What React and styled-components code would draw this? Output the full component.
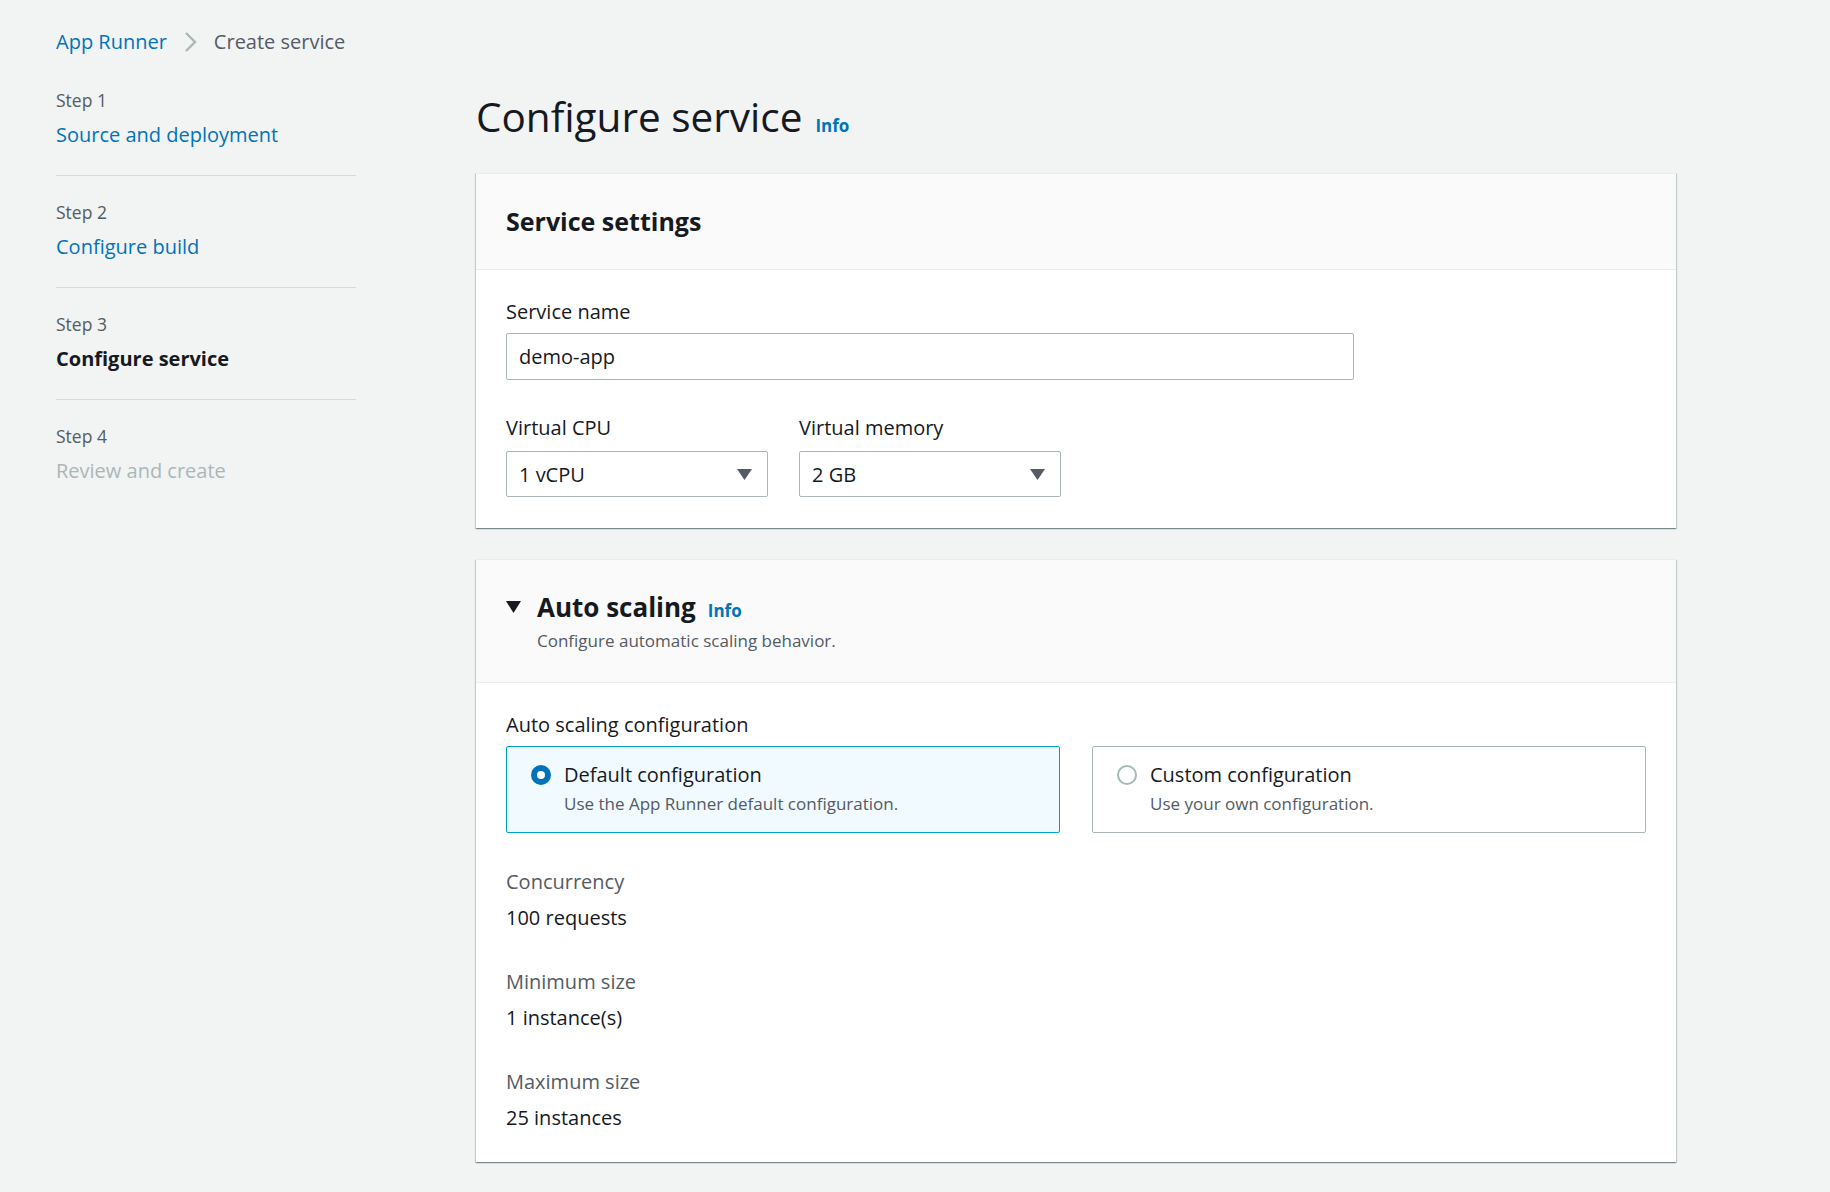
import React from "react";
import styled, { createGlobalStyle } from "styled-components";

const GlobalStyle = createGlobalStyle`
  html, body {
    margin: 0;
    padding: 0;
    background: #f2f3f3;
  }
  body {
    font-family: "Open Sans", "Noto Sans", Arial, sans-serif;
    color: #16191f;
  }
  * {
    box-sizing: border-box;
  }
`;

const Page = styled.div`
  min-height: 1192px;
  padding: 28px 0 0 56px;
`;

const Breadcrumbs = styled.nav`
  display: flex;
  align-items: center;
  gap: 17px;
  height: 28px;
  font-size: 20px;
  line-height: 28px;
`;

const Crumb = styled.span`
  color: ${(p) => (p.$link ? "#0073bb" : "#545b64")};
`;

const Layout = styled.div`
  display: grid;
  grid-template-columns: 300px 1200px;
  column-gap: 120px;
  margin-top: 8px;
`;

// 왼쪽 단계 목록
const StepNav = styled.ul`
  list-style: none;
  margin: 0;
  padding: 0;
`;

const StepItem = styled.li`
  padding: 24px 0 26px;
  border-bottom: 1px solid #d5dbdb;

  &:last-child {
    border-bottom: none;
  }
`;

const StepLabel = styled.div`
  font-size: 17.5px;
  line-height: 24px;
  color: #545b64;
`;

const stepColors = {
  link: "#0073bb",
  current: "#16191f",
  disabled: "#aab7b8",
};

const StepTitle = styled.div`
  margin-top: 9px;
  font-size: 20px;
  line-height: 28px;
  color: ${(p) => stepColors[p.$state]};
  font-weight: ${(p) => (p.$state === "current" ? 700 : 400)};
`;

const Main = styled.main`
  width: 1200px;
`;

const PageTitle = styled.h1`
  display: flex;
  align-items: baseline;
  gap: 13px;
  margin: 29px 0 32px;
  font-size: 40.5px;
  font-weight: 400;
  line-height: 48px;
`;

const Info = styled.span`
  font-size: 17px;
  font-weight: 700;
  color: #0073bb;
  line-height: 24px;
`;

const Card = styled.section`
  background: #ffffff;
  border-top: 1px solid #eaeded;
  box-shadow: 0 1px 1px 0 rgba(0, 28, 36, 0.3),
    1px 1px 1px 0 rgba(0, 28, 36, 0.15), -1px 1px 1px 0 rgba(0, 28, 36, 0.15);

  & + & {
    margin-top: 31px;
  }
`;

const CardHeader = styled.header`
  background: #fafafa;
  border-bottom: 1px solid #eaeded;
  padding: ${(p) => (p.$expandable ? "30px 30px 29px" : "31px 30px 32px")};
`;

const CardTitle = styled.h2`
  margin: 0;
  font-size: 25px;
  font-weight: 700;
  line-height: 32px;
`;

const CardBody = styled.div`
  padding: 28px 30px ${(p) => p.$bottom ?? 31}px;
`;

const FieldLabel = styled.div`
  font-size: 20px;
  line-height: 28px;
  margin-bottom: ${(p) => p.$gap ?? 7}px;
`;

const TextInput = styled.div`
  width: 848px;
  height: 47px;
  display: flex;
  align-items: center;
  padding: 0 12px;
  border: 1px solid #aab7b8;
  border-radius: 2px;
  font-size: 20px;
  background: #ffffff;
`;

const FieldRow = styled.div`
  display: flex;
  gap: 31px;
  margin-top: 34px;
`;

const Select = styled.div`
  width: 262px;
  height: 46px;
  display: flex;
  align-items: center;
  justify-content: space-between;
  padding: 0 15px 0 12px;
  border: 1px solid #aab7b8;
  border-radius: 2px;
  font-size: 20px;
  background: #ffffff;
`;

const ExpandRow = styled.div`
  display: flex;
  align-items: center;
  gap: 16px;
`;

const SectionTitle = styled.h2`
  display: flex;
  align-items: baseline;
  gap: 12px;
  margin: 0;
  font-size: 26px;
  font-weight: 700;
  line-height: 34px;
`;

const Description = styled.div`
  margin: 5px 0 0 31px;
  font-size: 17px;
  line-height: 24px;
  color: #545b64;
`;

const TileGrid = styled.div`
  display: grid;
  grid-template-columns: 1fr 1fr;
  gap: 32px;
`;

const Tile = styled.div`
  display: flex;
  align-items: flex-start;
  gap: 13px;
  padding: 14px 20px 16px 24px;
  border: 1px solid ${(p) => (p.$selected ? "#00a1c9" : "#aab7b8")};
  border-radius: 2px;
  background: ${(p) => (p.$selected ? "#f1faff" : "#ffffff")};
`;

const Radio = styled.span`
  flex: none;
  width: 20px;
  height: 20px;
  margin-top: 4px;
  border-radius: 50%;
  background: #ffffff;
  border: ${(p) => (p.$checked ? "6px solid #0073bb" : "2px solid #aab7b8")};
`;

const TileTitle = styled.div`
  font-size: 20px;
  line-height: 28px;
`;

const TileText = styled.div`
  margin-top: 3px;
  font-size: 17px;
  line-height: 24px;
  color: #545b64;
`;

const ValueList = styled.dl`
  display: flex;
  flex-direction: column;
  gap: 36px;
  margin: 35px 0 0;
`;

const ValueItem = styled.div``;

const ValueLabel = styled.dt`
  font-size: 20px;
  line-height: 28px;
  color: #545b64;
`;

const Value = styled.dd`
  margin: 8px 0 0;
  font-size: 20px;
  line-height: 28px;
`;

const Chevron = () => (
  <svg width="13" height="22" viewBox="0 0 13 22">
    <polyline
      points="2,2 11,11 2,20"
      fill="none"
      stroke="#aab7b8"
      strokeWidth="2.4"
    />
  </svg>
);

const DownArrow = ({ color = "#545b64", w = 15, h = 11 }) => (
  <svg width={w} height={h} viewBox={`0 0 ${w} ${h}`}>
    <polygon points={`0,0 ${w},0 ${w / 2},${h}`} fill={color} />
  </svg>
);

const steps = [
  { label: "Step 1", title: "Source and deployment", state: "link" },
  { label: "Step 2", title: "Configure build", state: "link" },
  { label: "Step 3", title: "Configure service", state: "current" },
  { label: "Step 4", title: "Review and create", state: "disabled" },
];

const values = [
  { label: "Concurrency", value: "100 requests" },
  { label: "Minimum size", value: "1 instance(s)" },
  { label: "Maximum size", value: "25 instances" },
];

export default function App() {
  return (
    <>
      <GlobalStyle />
      <Page>
        <Breadcrumbs>
          <Crumb $link>App Runner</Crumb>
          <Chevron />
          <Crumb>Create service</Crumb>
        </Breadcrumbs>

        <Layout>
          <StepNav>
            {steps.map((s) => (
              <StepItem key={s.label}>
                <StepLabel>{s.label}</StepLabel>
                <StepTitle $state={s.state}>{s.title}</StepTitle>
              </StepItem>
            ))}
          </StepNav>

          <Main>
            <PageTitle>
              Configure service <Info>Info</Info>
            </PageTitle>

            <Card>
              <CardHeader>
                <CardTitle>Service settings</CardTitle>
              </CardHeader>
              <CardBody>
                <FieldLabel>Service name</FieldLabel>
                <TextInput>demo-app</TextInput>
                <FieldRow>
                  <div>
                    <FieldLabel $gap={9}>Virtual CPU</FieldLabel>
                    <Select>
                      1 vCPU
                      <DownArrow />
                    </Select>
                  </div>
                  <div>
                    <FieldLabel $gap={9}>Virtual memory</FieldLabel>
                    <Select>
                      2 GB
                      <DownArrow />
                    </Select>
                  </div>
                </FieldRow>
              </CardBody>
            </Card>

            <Card>
              <CardHeader $expandable>
                <ExpandRow>
                  <DownArrow color="#16191f" w={15} h={12} />
                  <SectionTitle>
                    Auto scaling <Info>Info</Info>
                  </SectionTitle>
                </ExpandRow>
                <Description>Configure automatic scaling behavior.</Description>
              </CardHeader>
              <CardBody $bottom={30}>
                <FieldLabel>Auto scaling configuration</FieldLabel>
                <TileGrid>
                  <Tile $selected>
                    <Radio $checked />
                    <div>
                      <TileTitle>Default configuration</TileTitle>
                      <TileText>Use the App Runner default configuration.</TileText>
                    </div>
                  </Tile>
                  <Tile>
                    <Radio />
                    <div>
                      <TileTitle>Custom configuration</TileTitle>
                      <TileText>Use your own configuration.</TileText>
                    </div>
                  </Tile>
                </TileGrid>

                <ValueList>
                  {values.map((v) => (
                    <ValueItem key={v.label}>
                      <ValueLabel>{v.label}</ValueLabel>
                      <Value>{v.value}</Value>
                    </ValueItem>
                  ))}
                </ValueList>
              </CardBody>
            </Card>
          </Main>
        </Layout>
      </Page>
    </>
  );
}
